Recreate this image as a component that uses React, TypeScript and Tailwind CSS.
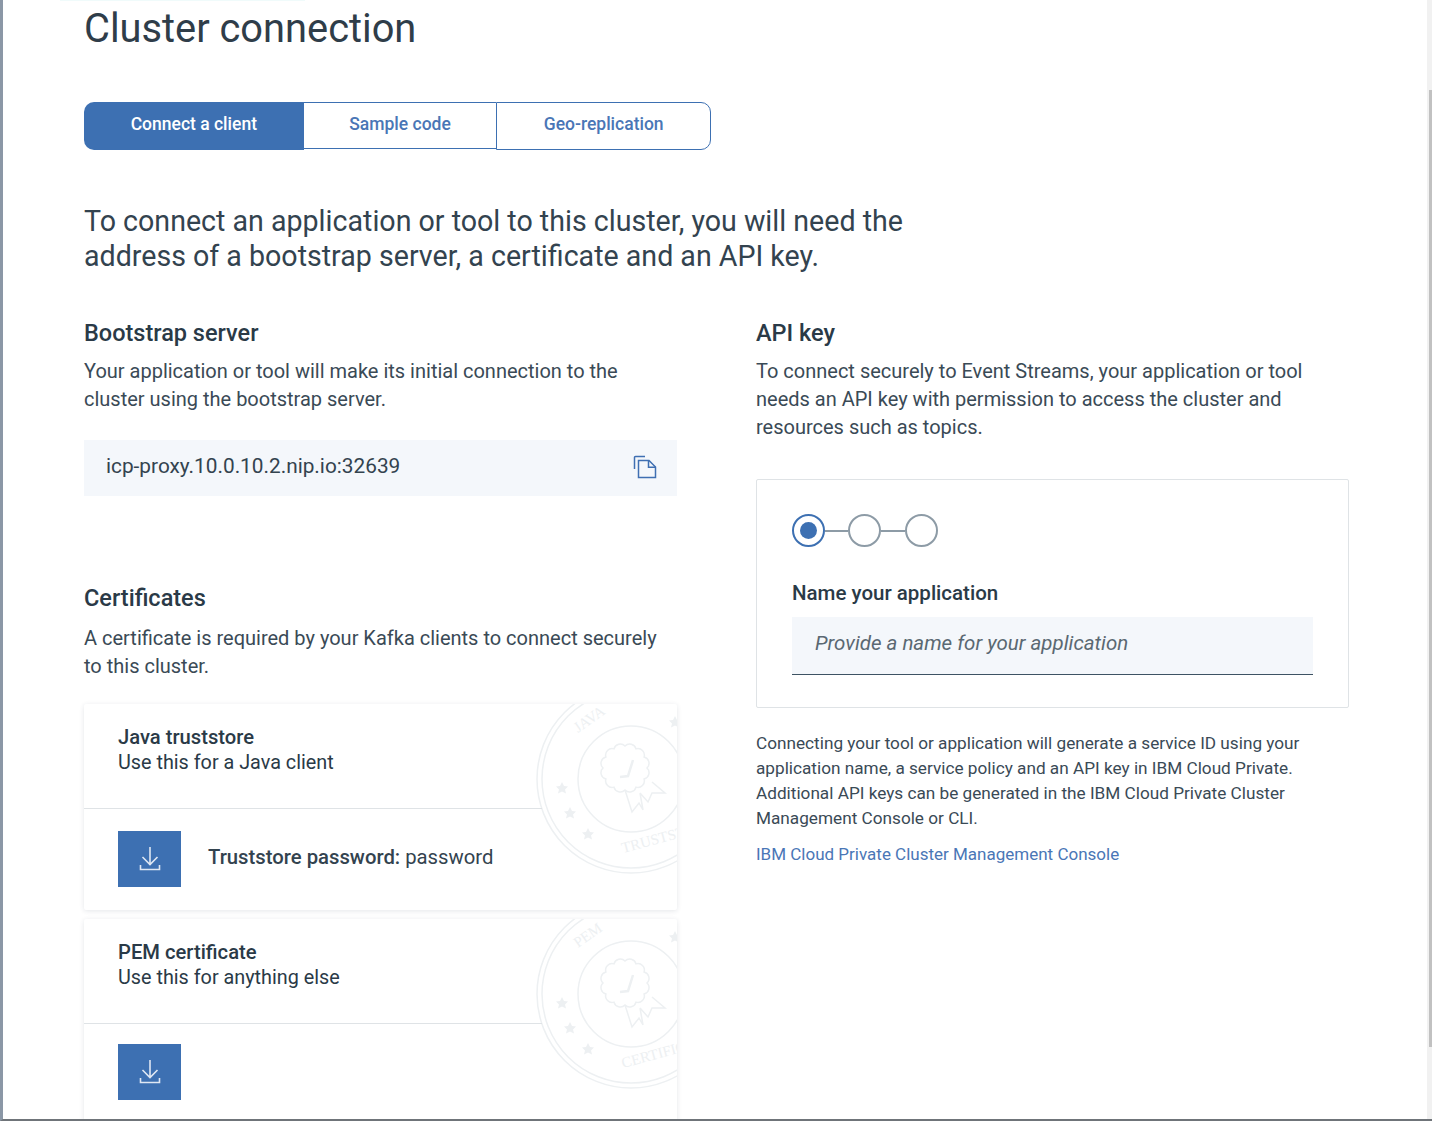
import type { ReactNode } from "react";

const font = "font-['Roboto',sans-serif]";

function DownloadIcon() {
  return (
    <svg width="24" height="26" viewBox="0 0 24 26" fill="none" stroke="#dfe7f3" strokeWidth="1.6">
      <path d="M12 1v17M4.500 11l7.500 7.500 7.500-7.500" />
      <path d="M2.500 19v4.500h19V19" />
    </svg>
  );
}

function CopyIcon() {
  return (
    <svg width="24" height="24" viewBox="0 0 24 24" fill="none" stroke="#3f6fb2" strokeWidth="1.5">
      <path d="M1.500 14V2.500a1 1 0 0 1 1-1H12" />
      <path d="M5.500 5.500h10.500l6.500 6.500v10.500h-17z" />
      <path d="M15.500 5.500v6.800h7" />
    </svg>
  );
}

const star = "l2 4 4 .5-3 3 1 4-4-2-4 2 1-4-3-3 4-.5z";

// scalloped edge of the rosette in the stamp
const rosette =
  Array.from({ length: 12 }, (_, i) => {
    const a = (i / 12) * Math.PI * 2;
    const b = ((i + 1) / 12) * Math.PI * 2;
    const x1 = 89 + 22 * Math.cos(a);
    const y1 = 74 + 22 * Math.sin(a);
    const x2 = 89 + 22 * Math.cos(b);
    const y2 = 74 + 22 * Math.sin(b);
    return `${i === 0 ? `M${x1.toFixed(1)} ${y1.toFixed(1)}` : ""}A6.500 6.500 0 0 1 ${x2.toFixed(1)} ${y2.toFixed(1)}`;
  }).join("") + "z";

// faint rubber stamp behind the certificate cards
function Seal({ top, bottom }: { top: string; bottom: string }) {
  return (
    <svg className="absolute left-[452px] top-[-10px] pointer-events-none" width="190" height="190" viewBox="0 0 190 190" fill="none" stroke="#edf0f2" strokeWidth="1.500">
      <circle cx="95" cy="85" r="94" />
      <circle cx="95" cy="85" r="89" />
      <circle cx="95" cy="85" r="53" />
      <path d={rosette} />
      <path d="M84 83l8-1 5-16" strokeWidth="2.500" />
      <path d="M89 96l7 22 7-9 4 7-3-17M116 88l13 11-13 0-4 9-8-9" />
      <text x="42" y="39" fontSize="15" fontFamily="Liberation Serif" fill="#edf0f2" stroke="none" transform="rotate(-35 42 39)">{top}</text>
      <text x="87" y="159" fontSize="15" fontFamily="Liberation Serif" fill="#edf0f2" stroke="none" transform="rotate(-15 87 159)">{bottom}</text>
      <path d={`M26 88${star}M34 113${star}M52 134${star}M139 22${star}`} fill="#edf0f2" stroke="none" />
    </svg>
  );
}

function CertCard({ title, sub, seal, sealBottom, rowClass, children }: { title: string; sub: string; seal: string; sealBottom: string; rowClass: string; children?: ReactNode }) {
  return (
    <div className="relative overflow-hidden bg-white shadow-[0_1px_5px_rgba(30,50,70,0.12)] rounded-[2px] h-[206px] shrink-0">
      <Seal top={seal} bottom={sealBottom} />
      <div className="relative h-[105px] pt-[21px] pl-[34px] border-b border-[#dfe3e6] mr-[135px] text-[20px] leading-[25px] text-[#2a3a47]">
        <p className="font-medium text-[20.200px] whitespace-nowrap">{title}</p>
        <p className="text-[19.800px] whitespace-nowrap">{sub}</p>
      </div>
      <div className={`relative flex items-center pl-[34px] ${rowClass}`}>
        <div className="w-[63px] h-[56px] bg-[#3d70b2] flex items-center justify-center shrink-0">
          <DownloadIcon />
        </div>
        {children}
      </div>
    </div>
  );
}

const tabBase = "flex items-center justify-center text-[17.500px] font-medium text-[#4a76b6]";

export default function App() {
  return (
    <div className={`${font} relative w-[1432px] h-[1121px] overflow-hidden bg-white border-l-[3px] border-l-[#8b97a6] border-b-2 border-b-[#6f7479] flex text-[#2f3f4c]`}>
      <div className="absolute left-[57px] top-0 w-[245px] h-[1px] bg-[#f0fbfb]" />
      <main className="flex-1 pl-[81px] min-w-0">
        <h1 className="text-[39.800px] leading-[46px] pt-[6px] text-[#2f3d49] whitespace-nowrap">Cluster connection</h1>

        <div className="flex mt-[50px] h-[48px] w-[627px] items-start">
          <div className={`${tabBase} w-[220px] h-[48px] pb-[3px] bg-[#3d70b2] text-white rounded-l-[10px]`}>Connect a client</div>
          <div className={`${tabBase} w-[193px] h-[47px] pb-[2px] border-t border-b border-[#3d70b2]`}>Sample code</div>
          <div className={`${tabBase} w-[215px] h-[48px] pb-[3px] border border-[#3d70b2] rounded-r-[10px]`}>Geo-replication</div>
        </div>

        <p className="mt-[54px] text-[28.600px] leading-[35px] text-[#33434f] whitespace-nowrap">
          To connect an application or tool to this cluster, you will need the<br />
          address of a bootstrap server, a certificate and an API key.
        </p>

        <div className="flex gap-[79px] mt-[45px]">
          <section className="w-[593px] shrink-0">
            <h2 className="text-[23.500px] leading-[28px] font-medium text-[#2a3a47]">Bootstrap server</h2>
            <p className="mt-[10px] text-[20px] leading-[28px] text-[#3a4a56] whitespace-nowrap">
              Your application or tool will make its initial connection to the<br />
              cluster using the bootstrap server.
            </p>
            <div className="mt-[27px] h-[56px] bg-[#f4f7fb] flex items-center justify-between pl-[22px] pr-[20px] pb-[3px] text-[20.800px] text-[#33434f]">
              <span>icp-proxy.10.0.10.2.nip.io:32639</span>
              <CopyIcon />
            </div>

            <h2 className="mt-[87px] text-[23.500px] leading-[30px] font-medium text-[#2a3a47]">Certificates</h2>
            <p className="mt-[11px] text-[20px] leading-[28px] text-[#3a4a56] whitespace-nowrap">
              A certificate is required by your Kafka clients to connect securely<br />
              to this cluster.
            </p>
            <div className="mt-[24px] flex flex-col gap-[9px]">
              <CertCard title="Java truststore" sub="Use this for a Java client" seal="JAVA" sealBottom="TRUSTSTORE" rowClass="pt-[22px]">
                <p className="ml-[27px] pb-[4px] text-[20.300px] whitespace-nowrap text-[#33434f]">
                  <span className="font-medium">Truststore password:</span> password
                </p>
              </CertCard>
              <CertCard title="PEM certificate" sub="Use this for anything else" seal="PEM" sealBottom="CERTIFICATE" rowClass="pt-[20px]" />
            </div>
          </section>

          <section className="w-[593px] shrink-0">
            <h2 className="text-[23.500px] leading-[28px] font-medium text-[#2a3a47]">API key</h2>
            <p className="mt-[10px] text-[20px] leading-[28px] text-[#3a4a56] whitespace-nowrap">
              To connect securely to Event Streams, your application or tool<br />
              needs an API key with permission to access the cluster and<br />
              resources such as topics.
            </p>
            <div className="mt-[38px] h-[229px] border border-[#dfe3e6] rounded-[2px] px-[35px] pt-[34px]">
              <div className="flex items-center">
                <div className="w-[33px] h-[33px] rounded-full border-[2px] border-[#3d70b2] flex items-center justify-center">
                  <div className="w-[17px] h-[17px] rounded-full bg-[#3d70b2]" />
                </div>
                <div className="w-[23px] h-[2px] bg-[#8d9ba6]" />
                <div className="w-[33px] h-[33px] rounded-full border-[2px] border-[#8d9ba6]" />
                <div className="w-[24px] h-[2px] bg-[#8d9ba6]" />
                <div className="w-[33px] h-[33px] rounded-full border-[2px] border-[#8d9ba6]" />
              </div>
              <h3 className="mt-[33px] text-[20.500px] leading-[26px] font-medium text-[#2a3a47]">Name your application</h3>
              <div className="mt-[11px] h-[58px] w-[521px] bg-[#f4f7fb] border-b border-[#3e5363] flex items-center pl-[23px] pb-[4px] italic text-[20.500px] text-[#5a6872]">
                Provide a name for your application
              </div>
            </div>
            <p className="mt-[23px] text-[17.200px] leading-[25px] text-[#3a4a56] whitespace-nowrap">
              Connecting your tool or application will generate a service ID using your<br />
              application name, a service policy and an API key in IBM Cloud Private.<br />
              Additional API keys can be generated in the IBM Cloud Private Cluster<br />
              Management Console or CLI.
            </p>
            <p className="mt-[11px] text-[17px] leading-[25px] text-[#4a76b6] whitespace-nowrap">IBM Cloud Private Cluster Management Console</p>
          </section>
        </div>
      </main>

      {/* scrollbar */}
      <div className="w-[5px] shrink-0 bg-[#f1f1f1] pt-[90px] flex justify-end">
        <div className="w-[3px] h-[957px] bg-[#c1c1c1]" />
      </div>
    </div>
  );
}
